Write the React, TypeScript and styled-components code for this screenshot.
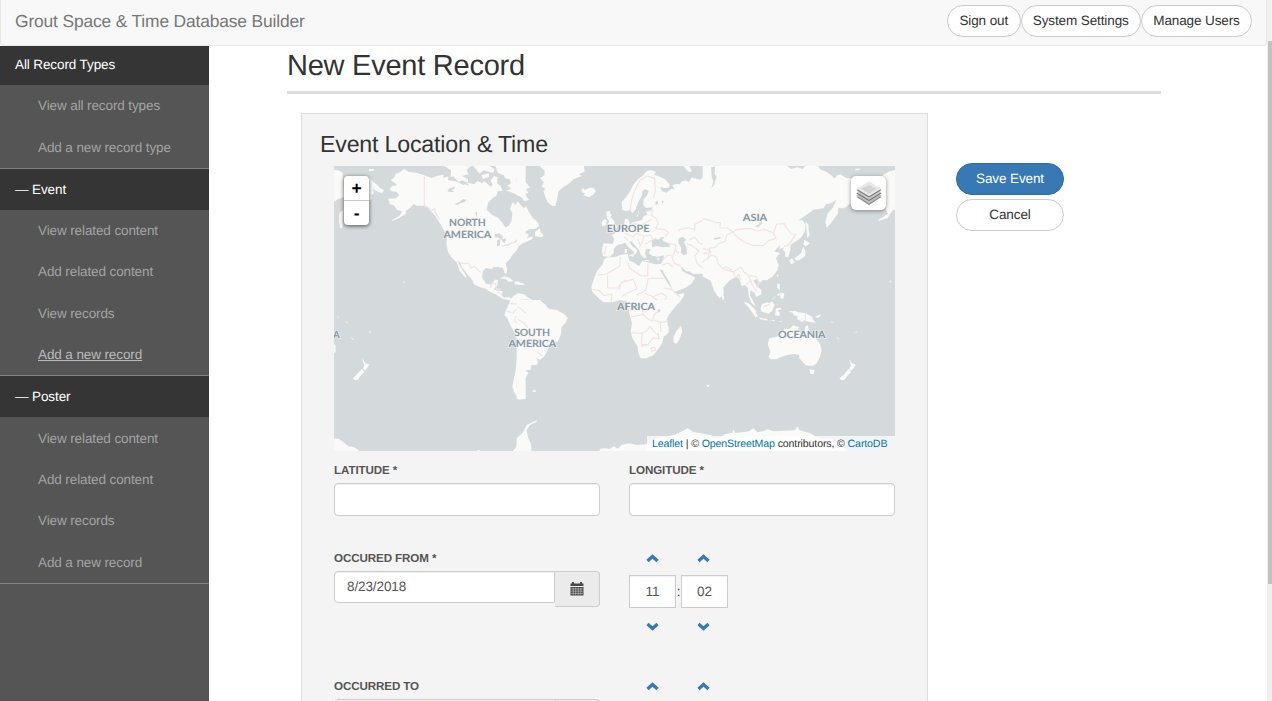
import React from 'react';
import styled, { createGlobalStyle } from 'styled-components';

const GlobalStyle = createGlobalStyle`
  * { box-sizing: border-box; letter-spacing: -0.0085em; }
  html, body { margin: 0; height: 100%; overflow: hidden; }
  body {
    font-family: "Liberation Sans", Arial, sans-serif;
    font-size: 13.52px;
    color: #333;
    background: #fff;
    text-rendering: geometricPrecision;
  }
  input, button { text-rendering: inherit; }
`;

const Window = styled.div`
  display: flex;
  width: 1272px;
  height: 701px;
  overflow: hidden;
`;

const Page = styled.div`
  display: flex;
  flex-direction: column;
  width: 1267px;
  height: 701px;
`;

const Navbar = styled.header`
  display: flex;
  flex: none;
  align-items: flex-start;
  justify-content: space-between;
  height: 46px;
  padding: 5px 14px 0 14px;
  background: #f8f8f8;
  border: 1px solid #e7e7e7;
  border-top: 0;
  border-radius: 0 0 4px 4px;
`;

const Brand = styled.div`
  font-size: 17.4px;
  line-height: 32px;
  color: #777;
`;

const NavActions = styled.nav`
  display: flex;
`;

const PillButton = styled.button<{ $primary?: boolean; $width: number }>`
  width: ${(p) => p.$width}px;
  height: 32px;
  padding: 0 0 1px;
  font: inherit;
  line-height: 19px;
  color: ${(p) => (p.$primary ? '#fff' : '#333')};
  background: ${(p) => (p.$primary ? '#3879b5' : '#fff')};
  border: 1px solid ${(p) => (p.$primary ? '#2e6da4' : '#ccc')};
  border-radius: 16px;
`;

const Body = styled.div`
  display: flex;
  flex: 1;
  min-height: 0;
`;

const Sidebar = styled.aside`
  width: 209px;
  background: #555;
`;

const NavGroup = styled.section`
  border-bottom: 1px solid #808080;
`;

const NavHeading = styled.div<{ $first?: boolean }>`
  display: flex;
  align-items: center;
  height: ${(p) => (p.$first ? 39 : 41)}px;
  padding: 0 15px ${(p) => (p.$first ? 2 : 0)}px;
  color: #fff;
  background: #353535;
`;

const NavItem = styled.a<{ $active?: boolean }>`
  display: flex;
  align-items: center;
  height: 41.4px;
  padding-left: 38px;
  color: ${(p) => (p.$active ? '#b9b9b9' : '#a3a3a3')};
  text-decoration: ${(p) => (p.$active ? 'underline' : 'none')};
`;

const Main = styled.main`
  flex: 1;
  padding: 0 106px 0 78px;
`;

const PageTitle = styled.h1`
  height: 48px;
  margin: 0 0 19px;
  font-size: 29px;
  font-weight: 400;
  line-height: 41px;
  border-bottom: 3px solid #ddd;
`;

const Columns = styled.div`
  display: flex;
  align-items: flex-start;
  gap: 28px;
  padding-left: 14px;
`;

const Panel = styled.section`
  width: 627px;
  height: 640px;
  padding: 17px 32px 0;
  background: #f4f4f4;
  border: 1px solid #ddd;
`;

const PanelTitle = styled.h2`
  margin: 0 0 8.4px -14px;
  font-size: 23.2px;
  font-weight: 400;
  line-height: 27px;
`;

const Actions = styled.div`
  display: flex;
  flex-direction: column;
  gap: 4px;
  padding-top: 50px;
`;

const MapFrame = styled.div`
  position: relative;
  width: 561px;
  height: 285px;
  overflow: hidden;
  background: #d4dadc;
`;

const MapDrawing = styled.svg`
  display: block;
  width: 561px;
  height: 285px;
`;

const ZoomControl = styled.div`
  position: absolute;
  left: 10px;
  top: 10px;
  width: 25px;
  border-radius: 4px;
  background: #fff;
  box-shadow: 0 1px 4px rgba(0, 0, 0, 0.65);
`;

const ZoomButton = styled.div`
  display: flex;
  align-items: center;
  justify-content: center;
  height: 24px;
  font: bold 17.5px "Liberation Sans", Arial, sans-serif;
  color: #000;
  & + & {
    height: 25px;
    border-top: 1px solid #ccc;
  }
`;

const LayersControl = styled.div`
  position: absolute;
  right: 9px;
  top: 10px;
  display: grid;
  place-items: center;
  width: 35px;
  height: 34px;
  border-radius: 5px;
  background: #fff;
  box-shadow: 0 1px 4px rgba(0, 0, 0, 0.4);
`;

const Attribution = styled.div`
  position: absolute;
  right: 0;
  bottom: 0;
  width: 248px;
  height: 15px;
  padding-left: 5px;
  font-size: 10.6px;
  line-height: 16px;
  white-space: nowrap;
  letter-spacing: -0.012em;
  background: rgba(255, 255, 255, 0.7);
  a { color: #0078a8; letter-spacing: inherit; }
`;

const FieldRow = styled.div<{ $height: number }>`
  display: grid;
  grid-template-columns: 266px 266px;
  column-gap: 29px;
  height: ${(p) => p.$height}px;
`;

const Label = styled.label`
  display: block;
  height: 20px;
  margin-bottom: 3px;
  font-size: 11.6px;
  font-weight: 700;
  line-height: 22px;
  color: #555;
`;

const TextInput = styled.input`
  display: block;
  width: 100%;
  height: 33px;
  padding: 0 12px;
  font: inherit;
  color: #555;
  background: #fff;
  border: 1px solid #ccc;
  border-radius: 4px;
  box-shadow: inset 0 1px 1px rgba(0, 0, 0, 0.06);
`;

const DateGroup = styled.div`
  display: flex;
  align-items: flex-start;
`;

const DateInput = styled(TextInput)`
  width: 221px;
  height: 32px;
  border-radius: 4px 0 0 4px;
`;

const CalendarButton = styled.div`
  display: flex;
  align-items: center;
  justify-content: center;
  width: 45px;
  height: 36px;
  background: #ebebeb;
  border: 1px solid #ccc;
  border-left: 0;
  border-radius: 0 4px 4px 0;
`;

const TimeColumn = styled.div`
  display: grid;
  grid-template-columns: 47px 5px 47px;
  grid-template-rows: 21px 6px 33px 37px;
  align-items: center;
  align-content: start;
  justify-items: center;
`;

const StepRow = styled.div`
  display: grid;
  grid-column: 1 / -1;
  grid-template-columns: 46px 5px 47px;
  justify-content: start;
  justify-items: center;
  width: 100%;
  svg:last-child { grid-column: 3; }
`;

const TimeInput = styled(TextInput)`
  padding: 0;
  text-align: center;
  border-radius: 0;
`;

const Gap = styled.div`
  grid-column: 1 / -1;
`;

const ScrollTrack = styled.div`
  width: 5px;
  height: 701px;
  padding: 41px 0 0 1px;
  background: #f1f1f1;
`;

const ScrollThumb = styled.div`
  height: 543px;
  background: #c1c1c1;
`;

const Chevron = ({ down }: { down?: boolean }) => (
  <svg width="13" height="9" viewBox="0 0 13 9">
    <path
      d={down ? 'M1.500 2 L6.500 6.500 L11.500 2' : 'M1.500 7 L6.500 2.500 L11.500 7'}
      fill="none"
      stroke="#337ab7"
      strokeWidth="3.200"
    />
  </svg>
);

const CalendarIcon = () => (
  <svg width="14" height="15" viewBox="0 0 14 15">
    <path d="M.5 2.5H2V1h2v1.5h6V1h2v1.5h1.5V5H.5z M.5 6h13v8.5H.5z" fill="#484848" />
    <path d="M1 8h12M1 10.2h12M1 12.4h12M3.2 6.5V14M5.7 6.5V14M8.3 6.5V14M10.8 6.5V14" stroke="#c4c4c4" strokeWidth=".6" />
  </svg>
);

const LayersIcon = () => (
  <svg width="26" height="26" viewBox="0 0 26 26">
    <path d="M.5 17 13 9l12.500 8L13 25z" fill="#8c8c8c" />
    <path d="M.5 15.800 13 8l12.500 7.800L13 23.500z" fill="#bdbdbd" />
    <path d="M.5 13.500 13 6l12.500 7.500L13 21z" fill="#777" />
    <path d="M.5 12.300 13 5l12.500 7.300L13 19.700z" fill="#c7c7c7" />
    <path d="M.5 10 13 2l12.500 8L13 17.500z" fill="#777" />
    <path d="M.5 8.800 13 1.500l12.500 7.300L13 16.300z" fill="#e9e9e9" />
    <path d="M5 8.800 13 5l8 3.800-8 5.200z" fill="#d4d4d4" />
  </svg>
);

type Tile = { x: number; y: number; land: string; water?: string; borders?: string };

const tiles: Tile[] = [
  {
    x: 1002,
    y: 480,
    land: `M-5 30 12 30 26 38 30 112 14 116 0 125-5 125z M16 158 28 150 25 203 19 205 15 185z
      M105 52 118 66 132 77 138 84 150 90 144 100 128 93 117 86 120 101 112 104 114 116 104 122z M104 27 121 27 118 33 106 33z
      M170 60 180 53 184 43 200 35 210 27 225 36 250 39 272 46 292 54 311 47 329 44 327 54 344 49 342 60 370 65 388 75 404 69 421 73 430 63 444 70 452 64 470 80 476 75 470 61 480 48 491 51 489 70 500 78 506 92 491 94 487 107 475 115 462 129 458 149 474 164 493 174 506 190 514 202 525 197 533 181 535 158 528 147 536 126 545 135 550 123 562 137 575 151 575 225 546 239 540 249 570 236 575 242 553 260 548 271 535 285 527 298 515 310 520 328 517 341 512 340 507 323 491 321 477 322 474 327 456 324 447 332 444 352 456 371 472 374 482 359 492 359 490 378 478 388 491 392 506 393 502 405 510 413 524 411 532 416 530 422 515 418 508 418 488 404 466 394 455 386 438 382 420 373 415 360 401 344 386 324 378 308 373 310 384 327 398 350 394 353 377 332 369 309 352 291 342 276 337 251 339 234 330 211 316 187 304 168 293 156 284 143 270 137 248 137 239 132 227 145 214 154 216 161 194 175 175 183 174 180 196 168 205 154 190 150 179 136 167 132 163 116 185 115 196 106 187 95 174 94 166 88 173 79 190 75z
      M330 18 410 18 398 30 404 43 384 48 402 58 402 68 384 61 374 66 358 49 350 51 351 31z
      M418 18 466 18 482 28 477 39 448 31 437 41z M484 18 575 18 575 119 554 107 536 98 517 92 532 85 519 77 531 70 528 58 513 55 510 46 492 39z M443 45 464 39 466 50 446 57z
      M497 355 512 349 526 353 539 364 523 365 515 356z M540 366 552 364 565 371 558 376 543 373z
      M520 455 530 432 527 420 541 406 555 400 575 404 575 455z M207 364 213 366 211 370z`,
    water: `M340 90 350 83 364 80 360 88 352 89 361 96 344 96z M362 132 377 125 387 117 398 119 392 126 379 130 370 135z M482 223 496 220 508 231 502 239 491 231 484 234z M490 240 499 237 497 257 489 258z M502 238 517 235 512 250 506 246z M513 255 531 249 523 258z M424 157 430 157 427 174z M393 73 401 71 405 78z M546 53 556 66 550 67z`,
    borders: `M271 46V137L285 144 289 153 302 146 304 158 317 179 M369 305 390 311 403 309 411 324 422 319 433 331 441 338 M468 384 474 370 485 371 487 387 500 387 M492 397 505 405 M503 259 522 254 548 243 M532 452 545 440 553 430 555 403`,
  },
  {
    x: 1560,
    y: 480,
    land: `M-10 145 8 147 18 139 26 154 38 174 50 183 58 196 47 206 29 208 5 220-10 223z M45 216 59 204 63 218 71 225 66 232 45 228z M-10 233 16 220 27 223 20 235 38 229 37 237 13 248-10 253z M-10 35 7 41 2 58 18 67 30 83 18 86 25 99 14 102 27 119 14 124 2 109-10 105z M-10 58 10 60 8 78-10 80z
      M59 18 192 18 194 35 177 42 185 48 160 58 149 69 130 81 116 94 112 114 106 139 97 138 83 127 76 111 70 94 76 87 65 80 71 67 60 55 73 46 74 32z
      M184 88 193 85 192 91 206 84 220 83 228 93 221 103 208 111 190 106 195 99 187 98z
      M259 155 270 152 269 160 276 164 272 172 281 181 286 194 294 200 284 207 262 207 269 198 262 195 268 184 260 173z M245 187 253 177 261 181 257 196 246 199z
      M305 126 318 112 330 94 341 73 354 58 371 45 379 34 392 30 408 35 402 44 419 50 435 58 450 74 446 83 430 84 421 80 426 94 439 98 453 88 463 87 457 76 468 72 480 73 483 65 496 61 507 66 515 52 530 57 542 59 552 46 556 28 560 18 578 18 578 358 563 352 551 341 532 341 519 342 509 334 499 334 481 318 487 333 501 341 509 344 526 353 515 370 500 382 477 391 463 396 456 386 447 364 436 347 427 329 420 329 430 347 442 368 457 389 464 400 478 403 493 399 490 412 474 430 451 455 328 455 325 438 318 424 300 420 276 427 251 427 232 411 217 395 214 380 222 355 232 332 248 313 252 298 263 292 283 292 304 284 323 281 328 302 343 308 357 319 367 303 388 308 407 313 422 312 430 300 432 286 413 290 396 287 386 280 392 267 378 268 375 280 379 292 371 294 361 282 358 271 346 257 334 243 328 246 337 259 352 271 347 282 341 285 342 276 325 261 316 248 304 252 293 254 281 267 281 280 268 291 249 288 246 270 250 250 278 251 283 236 274 225 284 221 292 210 307 203 313 190 315 176 325 178 327 186 330 195 340 185 343 178 354 163 357 149 349 145 337 160 330 148 320 154 307 150z
      M325 285 342 282 340 291z M314 267 321 267 321 279 314 280z M374 300 387 301 386 304 375 304z M409 296 421 294 414 301z M490 18 508 18 516 33 507 37z M-5 369 10 370 15 375-5 374z M-10 400 12 405 35 419 60 428 76 432 83 450 65 455-10 455z`,
    water: `M333 180 340 167 352 170 357 154 348 143 356 124 366 106 368 92 376 88 386 93 382 105 371 117 370 134 377 144 399 142 393 150 377 153 382 164 372 168 365 181 343 186z M395 241 408 234 413 239 423 234 430 243 448 251 450 260 428 262 411 258 396 262z M421 232 433 231 425 239z M476 235 489 230 499 240 491 246 500 263 501 282 491 286 483 278 483 262 475 250z M406 126 413 122 414 131 407 135z M425 122 431 122 428 132z`,
    borders: `M330 155 335 120 344 92 360 61 382 48 404 55 406 90 401 115 M380 155 398 150 394 165 409 176 415 190 407 205 436 209 446 218 435 230 M340 190 365 195 395 178 M315 220 340 230 350 220 372 229 366 247 358 262 M312 231 325 241 M354 236 362 260 M374 227 391 225 399 240 374 253 M475 214 480 208 508 203 524 210 525 193 550 180 575 180 M443 250 467 254 467 272 M428 300 443 286 461 285 465 271 477 280 M455 288 463 310 481 317 M500 251 516 257 538 273 524 287 531 310 556 330 565 300 575 290 M508 239 524 231 537 249 570 260 M253 285 258 258 M301 291 299 318 260 342 231 345 M323 304 329 325 363 347 383 348 384 310 M387 355H430 M262 345 263 384 293 384 304 369 318 359 M218 388 239 392 252 407 276 402 273 427 M297 390 304 367 340 358 M340 358 350 387 322 399 304 410 M385 354 377 391 350 405 M375 400 399 410 425 399 440 410 430 434 M431 384 455 388 480 411 M400 412 424 430 M426 316 444 308 458 321 M2 420 25 419 30 438 M40 422 42 438`,
  },
  {
    x: 2118,
    y: 480,
    land: `M-10 18 243 18 255 27 274 22 289 27 299 18 335 18 343 28 360 35 382 50 403 43 420 54 440 55 450 130 432 132 414 145 397 144 396 160 376 188 362 203 358 187 364 162 380 143 391 121 374 130 361 132 352 145 322 149 300 166 276 182 289 181 299 193 297 213 287 230 271 244 253 255 253 270 247 292 238 291 237 275 231 269 234 262 219 267 224 254 204 274 222 279 210 295 218 315 214 331 199 350 183 361 170 360 163 368 152 358 142 361 151 376 166 390 166 403 151 411 146 398 133 391 132 407 140 420 150 440 136 428 128 407 126 384 116 375 107 379 100 356 90 350 72 361 52 382 53 406 40 415 25 394 14 362 0 355-10 350z
      M299 185 307 194 308 211 311 224 304 234z M295 240 312 249 301 258 292 255z M291 260 298 272 298 287 279 301 269 301 265 294 278 286 286 278z M250 301 258 295 266 308 255 313z M211 346 217 344 216 352z M213 371 221 371 222 391 214 384z M224 398 235 400 233 414 225 418 222 409z M213 403 224 399 218 409z M198 419 210 405 202 419z M48 407 55 409 53 421 48 416z M112 425 126 430 153 455 139 455z M163 443 180 437 197 424 206 434 197 455 167 455z M540 150 530 45 551 34 575 29 575 151 561 149 545 174 518 183 518 179 546 162z M449 26 464 26 458 31 447 31z M551 361 557 365 552 368z`,
    water: `M15 22 27 20 26 42 32 51 24 76 16 84 22 65 17 49z M147 199 158 193 166 184 169 190 156 202z M23 235 42 231 46 234 27 240z M377 44 390 41 392 51 383 55z`,
    borders: `M-10 176 12 181 27 187 43 188 42 204 64 204 80 216 M80 216 94 208 120 206 137 206 152 213 174 208 201 218 210 235 188 242 171 257 140 256 113 245 92 230 80 216 62 226 56 245 37 251 28 262 9 265 15 279-10 280 M203 217 212 192 235 191 240 202 256 222 270 223 259 238 248 255 234 259 M-10 307 16 285 31 291 36 310 49 325 81 336 91 330 105 321 114 337 123 343 135 360 121 373 M81 337 90 353 99 343 104 361 M130 347 151 350 159 368 152 384 M49 326 60 321 79 331 M133 360 144 385 154 396 M-10 265 10 271 6 298 M171 445 195 430`,
  },
  {
    x: 1002,
    y: 915,
    land: `M-5 115 4 120 5 140-5 151z M84 160 92 171 97 176 107 178 99 190 91 197 87 189 91 181z M84 191 91 201 79 213 72 224 62 225 57 220 66 211z M34 47 42 53 39 55z M49 95 60 103 57 104z M101 85 111 78 112 81z M10 34 15 39 12 39z
      M530-15 575-15 575 283 561 282 550 276 540 260 535 245 538 230 546 190 549 160 553 117 542 84 529 60 519 38 511 30 515 18z M-5 400 15 402 31 413 43 424 59 426 78 438 76 445-5 445z M425 440 433 434 443 440z M535 440 547 425 550 406 560 402 560 432 569 391 575 365 575 440z`,
    borders: `M519 18 536 24 546 14 559 25 543 38 542 49 554 57 560 78 M530-4 560-2 M562 75 558 90 565 117 558 144 552 205 548 245 562 260`,
  },
  {
    x: 1560,
    y: 915,
    land: `M-10-15 60-15 79 3 86 11 111 15 135 29 143 40 137 53 125 66 122 90 113 110 92 117 82 137 72 155 60 164 49 158 54 171 51 179 34 180 31 195 17 195 25 205 15 221 7 241 12 256 3 265 16 280 0 284-10 282z M37 257 48 255 48 260 39 261z
      M326-15 484-15 466 5 447 29 440 44 446 69 446 83 431 95 427 114 416 130 400 151 379 160 362 160 356 147 352 123 337 100 332 78 336 55 330 34 325 12z M483 62 487 79 478 104 469 117 461 112 460 95 470 77z
      M50 345 49 351 30 360 20 375 25 400 33 417 35 440-10 440-10 400 10 381 20 360z M237 440 241 431 254 430 268 432 282 424 293 431 306 419 328 415 350 420 379 418 399 403 430 396 459 391 471 386 488 378 503 370 520 381 543 385 575 391 575 440z M562 239 568 243 563 246z`,
    borders: `M-5 5 17 24 M-6 43 12 55 24 69 M-5 102 18 111 36 122 M50 141 68 154 M343-2 365 0 370 28 332 36 M332 83 363 85 380 78 390 65 404 82 418 95 M370 28 381 40 397 48 402 30 415 18 M402 46 425 52 446 48 M367 83 364 119 384 118 399 99 421 101 M364 124 383 120 M393 131 404 127 406 135 396 139z M420 52 423 80 M415 83 417 104`,
    water: `M412 14 420 12 421 20 414 23z`,
  },
  {
    x: 2118,
    y: 915,
    land: `M190 100 210 96 226 87 236 71 251 72 261 61 279 67 275 79 293 91 299 63 305 61 313 86 328 99 342 117 347 135 342 156 331 176 319 183 299 181 288 169 280 160 279 150 266 147 240 151 225 156 211 163 194 163 188 157 193 141 185 118z M310 193 326 195 323 208 313 206z M429 161 436 173 450 179 441 191 434 198 430 190 435 181z M428 191 435 202 423 213 416 224 406 225 400 219 413 210z
      M247 19 268 18 277 22 300 25 318 35 321 45 330 53 312 51 293 46 290 51 273 43 275 34 263 31 261 24z M119-8 130-4 143 10 156 34 148 37 135 17z M154 37 169 40 184 42 184 47 164 43z M168-3 185-8 201 1 196 16 188 27 173 22 165 10z M210 10 226 9 226 13 215 16 222 25 219 34 207 30z M190 45 207 45 206 49z M217 51 226 47 227 50z M328 35 344 27 342 35 333 38z M390 94 402 104 395 101z M444 85 454 78 453 82z M374 48 382 54 378 54z M2 239 8 239 10 245 3 245z
      M-5 394 12 391 18 399 40 400 55 388 78 384 82 373 88 384 107 382 130 379 142 369 154 382 174 378 185 372 202 379 234 377 266 376 274 364 281 376 313 385 342 401 378 401 395 414 412 420 422 440-5 440z`,
    borders: `M298 24V47 M173 5 191-2`,
  },
];

const mapLabels = [
  { text: 'NORTH', x: 1402, y: 679, w: 110 },
  { text: 'AMERICA', x: 1402, y: 713, w: 143 },
  { text: 'EUROPE', x: 1884, y: 695, w: 128 },
  { text: 'ASIA', x: 2265, y: 662, w: 73 },
  { text: 'AFRICA', x: 1908, y: 929, w: 114 },
  { text: 'SOUTH', x: 1596, y: 1007, w: 107 },
  { text: 'AMERICA', x: 1597, y: 1041, w: 143 },
  { text: 'OCEANIA', x: 2405, y: 1013, w: 142 },
  { text: 'A', x: 1009, y: 1013, w: 19 },
];

const WorldMap = () => (
  <MapDrawing viewBox="1002 498 1683 855" preserveAspectRatio="none">
    {tiles.map((t) => (
      <g key={`${t.x}-${t.y}`} transform={`translate(${t.x} ${t.y})`} strokeLinejoin="round">
        <path d={t.land} fill="#fafaf8" />
        {t.water && <path d={t.water} fill="#d4dadc" />}
        {t.borders && <path d={t.borders} fill="none" stroke="#f3e2e4" strokeWidth="3.500" />}
      </g>
    ))}
    {mapLabels.map((l) => (
      <text
        key={`${l.text}-${l.x}`}
        x={l.x}
        y={l.y}
        textAnchor="middle"
        textLength={l.w}
        lengthAdjust="spacingAndGlyphs"
        fontFamily="Lato, sans-serif"
        fontWeight="700"
        fontSize="30"
        fill="#8798a4"
        stroke="#f4f6f6"
        strokeWidth="5"
        strokeOpacity=".65"
        paintOrder="stroke"
      >
        {l.text}
      </text>
    ))}
  </MapDrawing>
);

const StepButtons = ({ down }: { down?: boolean }) => (
  <StepRow>
    <Chevron down={down} />
    <Chevron down={down} />
  </StepRow>
);

const Time = ({ hour, minute }: { hour: string; minute: string }) => (
  <TimeColumn>
    <StepButtons />
    <Gap />
    <TimeInput defaultValue={hour} />
    <span>:</span>
    <TimeInput defaultValue={minute} />
    <StepButtons down />
  </TimeColumn>
);

const DateField = ({ label, value }: { label: string; value: string }) => (
  <div>
    <Label>{label}</Label>
    <DateGroup>
      <DateInput defaultValue={value} />
      <CalendarButton>
        <CalendarIcon />
      </CalendarButton>
    </DateGroup>
  </div>
);

const recordLinks = ['View related content', 'Add related content', 'View records', 'Add a new record'];

const navGroups = [
  { title: 'All Record Types', links: ['View all record types', 'Add a new record type'] },
  { title: '— Event', links: recordLinks, active: 3 },
  { title: '— Poster', links: recordLinks },
];

const InputBlock = styled.div`
  padding-top: 9px;
`;

const LabeledInput = ({ label }: { label: string }) => (
  <InputBlock>
    <Label>{label}</Label>
    <TextInput />
  </InputBlock>
);

export default function App() {
  return (
    <Window>
      <GlobalStyle />
      <Page>
        <Navbar>
          <Brand>Grout Space &amp; Time Database Builder</Brand>
          <NavActions>
            <PillButton $width={73.5}>Sign out</PillButton>
            <PillButton $width={120.5}>System Settings</PillButton>
            <PillButton $width={111}>Manage Users</PillButton>
          </NavActions>
        </Navbar>
        <Body>
          <Sidebar>
            {navGroups.map((group, g) => (
              <NavGroup key={group.title}>
                <NavHeading $first={g === 0}>{group.title}</NavHeading>
                {group.links.map((link, i) => (
                  <NavItem key={link} $active={group.active === i}>
                    {link}
                  </NavItem>
                ))}
              </NavGroup>
            ))}
          </Sidebar>
          <Main>
            <PageTitle>New Event Record</PageTitle>
            <Columns>
              <Panel>
                <PanelTitle>Event Location &amp; Time</PanelTitle>
                <MapFrame>
                  <WorldMap />
                  <ZoomControl>
                    <ZoomButton>+</ZoomButton>
                    <ZoomButton>-</ZoomButton>
                  </ZoomControl>
                  <LayersControl>
                    <LayersIcon />
                  </LayersControl>
                  <Attribution>
                    <a>Leaflet</a> | © <a>OpenStreetMap</a> contributors, © <a>CartoDB</a>
                  </Attribution>
                </MapFrame>
                <FieldRow $height={96.6}>
                  <LabeledInput label="LATITUDE *" />
                  <LabeledInput label="LONGITUDE *" />
                </FieldRow>
                <FieldRow $height={128}>
                  <DateField label="OCCURED FROM *" value="8/23/2018" />
                  <Time hour="11" minute="02" />
                </FieldRow>
                <FieldRow $height={128}>
                  <DateField label="OCCURRED TO" value="" />
                  <TimeColumn>
                    <StepButtons />
                  </TimeColumn>
                </FieldRow>
              </Panel>
              <Actions>
                <PillButton $primary $width={108}>
                  Save Event
                </PillButton>
                <PillButton $width={108}>Cancel</PillButton>
              </Actions>
            </Columns>
          </Main>
        </Body>
      </Page>
      <ScrollTrack>
        <ScrollThumb />
      </ScrollTrack>
    </Window>
  );
}
